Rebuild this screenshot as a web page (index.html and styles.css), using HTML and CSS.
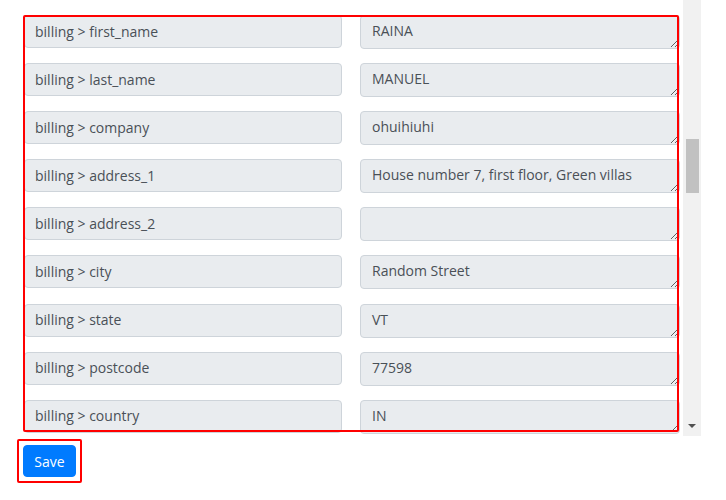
FILE: index.html
```html
<!DOCTYPE html>
<html lang="en">
<head>
    <meta charset="UTF-8">
    <meta name="viewport" content="width=device-width, initial-scale=1.0">
    <title>Field mapping</title>
    <link rel="stylesheet" href="styles.css">
</head>
<body>
    <div id="frame">
        <div id="scroll-area">
            <div class="map-row">
                <div class="field-name">billing &gt; first_name</div>
                <textarea class="field-value" rows="1">RAINA</textarea>
            </div>
            <div class="map-row">
                <div class="field-name">billing &gt; last_name</div>
                <textarea class="field-value" rows="1">MANUEL</textarea>
            </div>
            <div class="map-row">
                <div class="field-name">billing &gt; company</div>
                <textarea class="field-value" rows="1">ohuihiuhi</textarea>
            </div>
            <div class="map-row">
                <div class="field-name">billing &gt; address_1</div>
                <textarea class="field-value" rows="1">House number 7, first floor, Green villas</textarea>
            </div>
            <div class="map-row">
                <div class="field-name">billing &gt; address_2</div>
                <textarea class="field-value" rows="1"></textarea>
            </div>
            <div class="map-row">
                <div class="field-name">billing &gt; city</div>
                <textarea class="field-value" rows="1">Random Street</textarea>
            </div>
            <div class="map-row">
                <div class="field-name">billing &gt; state</div>
                <textarea class="field-value" rows="1">VT</textarea>
            </div>
            <div class="map-row">
                <div class="field-name">billing &gt; postcode</div>
                <textarea class="field-value" rows="1">77598</textarea>
            </div>
            <div class="map-row">
                <div class="field-name">billing &gt; country</div>
                <textarea class="field-value" rows="1">IN</textarea>
            </div>
        </div>
        <div id="scrollbar">
            <div class="scroll-thumb"></div>
            <div class="scroll-arrow"></div>
        </div>
        <div class="highlight" id="list-highlight"></div>
    </div>

    <div class="save-box">
        <button type="button" class="btn-save">Save</button>
    </div>
</body>
</html>
```

FILE: styles.css
```css
body {
    margin: 0;
    background: #fff;
    font-family: "Open Sans", "Liberation Sans", sans-serif;
    color: #495057;
}
#frame {
    position: relative;
    display: flex;
    width: 701px;
    height: 436px;
}
#scroll-area {
    flex: 1;
    overflow: hidden;
    padding: 15px 3px 0 24px;
    display: flex;
    flex-direction: column;
    gap: 14.1px;
}
.map-row {
    display: flex;
    align-items: flex-start;
    gap: 18px;
}
.field-name {
    width: 318px;
    height: 33px;
    box-sizing: border-box;
    padding: 0 10px 1px;
    display: flex;
    align-items: center;
    font-size: 14px;
    background: #e9ecef;
    border: 1px solid #ced4da;
    border-radius: 4px;
    flex-shrink: 0;
}
.field-value {
    flex: 1;
    height: 34px;
    box-sizing: border-box;
    margin: 0;
    padding: 5px 11px 7px;
    font-family: inherit;
    font-size: 14px;
    line-height: 20px;
    color: #495057;
    background: #e9ecef;
    border: 1px solid #ced4da;
    border-radius: 4px;
    overflow: hidden;
}
#scrollbar {
    width: 18px;
    background: #f1f1f1;
    position: relative;
    display: flex;
    flex-direction: column;
    align-items: center;
}
.scroll-thumb {
    width: 13px;
    height: 54px;
    margin: 139px 0 0 1px;
    background: #c1c1c1;
}
.scroll-arrow {
    margin-top: auto;
    margin-bottom: 8px;
    width: 0;
    height: 0;
    border-left: 4px solid transparent;
    border-right: 4px solid transparent;
    border-top: 4px solid #505050;
}
.highlight {
    position: absolute;
    left: 23px;
    top: 15px;
    width: 656px;
    height: 417px;
    box-sizing: border-box;
    border: 2px solid #ff0000;
    border-radius: 2px;
    pointer-events: none;
}
.save-box {
    display: inline-block;
    margin: 3px 0 0 17px;
    padding: 4px;
    border: 2px solid #ff0000;
    border-radius: 2px;
}
.btn-save {
    display: block;
    width: 53px;
    height: 32px;
    padding: 0;
    font-family: inherit;
    font-size: 14px;
    color: #fff;
    background: #007bff;
    border: 1px solid #007bff;
    border-radius: 4px;
}
```
